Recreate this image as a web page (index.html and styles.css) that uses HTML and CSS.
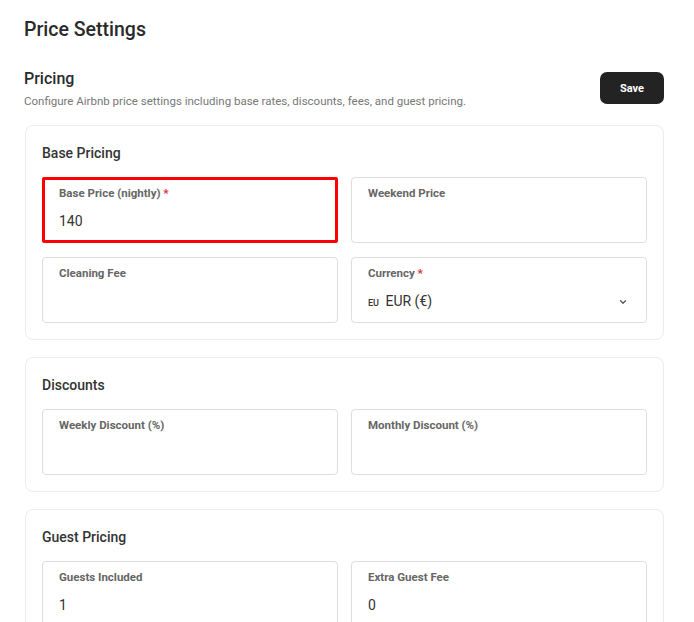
FILE: index.html
```html
<!DOCTYPE html>
<html lang="en">
<head>
    <meta charset="UTF-8">
    <meta name="viewport" content="width=device-width, initial-scale=1.0">
    <link rel="stylesheet" href="styles.css">
    <title>Price Settings</title>
</head>
<body>
    <div class="page">
        <h1 class="page-title">Price Settings</h1>

        <div class="section-head">
            <div>
                <h2 class="section-title">Pricing</h2>
                <p class="section-desc">Configure Airbnb price settings including base rates, discounts, fees, and guest pricing.</p>
            </div>
            <button class="save">Save</button>
        </div>

        <div class="card">
            <h3 class="card-title">Base Pricing</h3>
            <div class="grid">
                <div class="field highlight">
                    <span class="label">Base Price (nightly) <b class="req">*</b></span>
                    <span class="value">140</span>
                </div>
                <div class="field">
                    <span class="label">Weekend Price</span>
                    <span class="value"></span>
                </div>
                <div class="field">
                    <span class="label">Cleaning Fee</span>
                    <span class="value"></span>
                </div>
                <div class="field">
                    <span class="label">Currency <b class="req">*</b></span>
                    <span class="value select">
                        <span><small class="flag">EU</small> EUR (€)</span>
                        <svg width="10" height="10" viewBox="0 0 10 10"><path d="M2.5 3.8 5 6.2l2.5-2.4" fill="none" stroke="#555" stroke-width="1.3" stroke-linecap="round" stroke-linejoin="round"/></svg>
                    </span>
                </div>
            </div>
        </div>

        <div class="card">
            <h3 class="card-title">Discounts</h3>
            <div class="grid">
                <div class="field">
                    <span class="label">Weekly Discount (%)</span>
                    <span class="value"></span>
                </div>
                <div class="field">
                    <span class="label">Monthly Discount (%)</span>
                    <span class="value"></span>
                </div>
            </div>
        </div>

        <div class="card">
            <h3 class="card-title">Guest Pricing</h3>
            <div class="grid">
                <div class="field">
                    <span class="label">Guests Included</span>
                    <span class="value">1</span>
                </div>
                <div class="field">
                    <span class="label">Extra Guest Fee</span>
                    <span class="value">0</span>
                </div>
            </div>
        </div>
    </div>
</body>
</html>
```

FILE: styles.css
```css
*{
    box-sizing: border-box;
}

body{
    margin: 0;
    background-color: #fff;
    font-family: Roboto, "Noto Sans", Arial, sans-serif;
    color: #222;
}

.page{
    width: 664px;
    padding: 18px 0 40px 24px;
}

.page-title{
    margin: 0 0 27px;
    font-size: 19.5px;
    font-weight: 500;
    line-height: 24px;
    color: #2a2a2a;
}

.section-head{
    display: flex;
    justify-content: space-between;
    align-items: flex-start;
    margin-bottom: 17px;
}

.section-title{
    margin: 0;
    font-size: 16px;
    font-weight: 500;
    line-height: 20px;
    color: #2a2a2a;
}

.section-desc{
    margin: 5px 0 0;
    font-size: 11.5px;
    color: #777;
}

.save{
    margin-top: 3px;
    width: 64px;
    height: 32px;
    border: none;
    border-radius: 7px;
    background-color: #232323;
    color: #fff;
    font-family: inherit;
    font-size: 11px;
    font-weight: 700;
}

.card{
    margin-left: 1px;
    margin-bottom: 17px;
    padding: 17px 16px 16px;
    border: 1px solid #ececec;
    border-radius: 8px;
    background-color: #fff;
}

.card-title{
    margin: 0 0 14px;
    font-size: 14px;
    font-weight: 500;
    line-height: 20px;
    color: #333;
}

.grid{
    display: grid;
    grid-template-columns: 1fr 1fr;
    gap: 14px 13px;
}

.field{
    height: 66px;
    padding: 8px 16px;
    border: 1px solid #dedede;
    border-radius: 4px;
    display: flex;
    flex-direction: column;
}

.field.highlight{
    border: 3px solid #ff0000;
    border-radius: 2px;
    padding: 6px 14px;
}

.label{
    font-size: 11.5px;
    font-weight: 700;
    line-height: 14px;
    color: #666;
}

.req{
    color: #e0313a;
}

.value{
    margin-top: 12px;
    font-size: 14px;
    line-height: 18px;
    color: #333;
}

.select{
    display: flex;
    justify-content: space-between;
    align-items: center;
    padding-right: 2px;
}

.flag{
    font-size: 9px;
    font-weight: 500;
    margin-right: 3px;
}
```
